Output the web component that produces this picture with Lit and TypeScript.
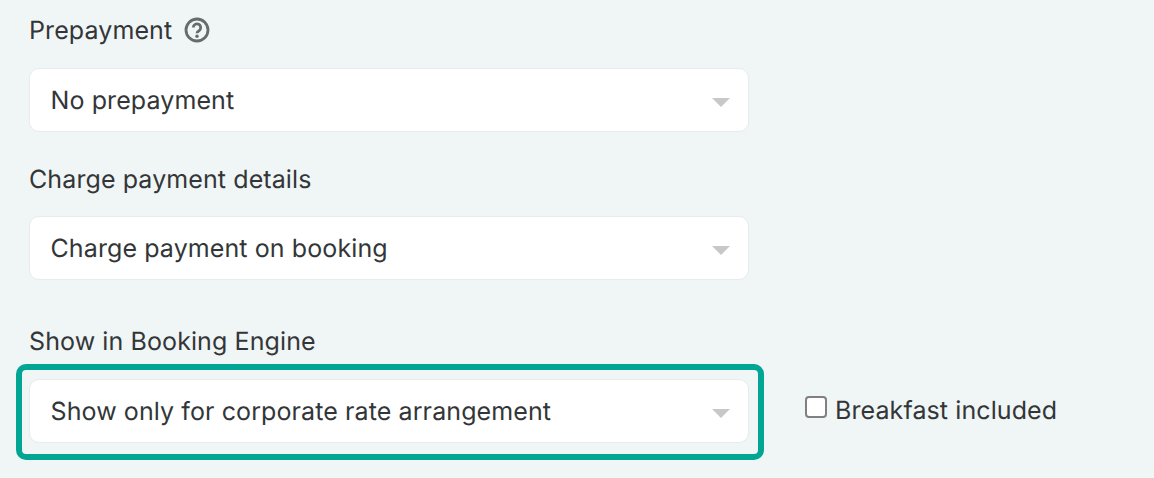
import { LitElement, html, css } from 'lit';
import { customElement } from 'lit/decorators.js';

@customElement('app-root')
export class AppRoot extends LitElement {
  static styles = css`
    :host {
      display: block;
      width: 1154px;
      height: 478px;
      overflow: hidden;
      background: #f0f5f5;
      color: #333638;
      font-family: Inter, 'Liberation Sans', sans-serif;
      font-size: 25px;
      line-height: 32px;
      letter-spacing: 0.1px;
      text-rendering: geometricPrecision;
    }

    .form {
      display: flex;
      flex-direction: column;
      padding: 14px 0 0 29px;
    }

    .label {
      display: flex;
      align-items: center;
      gap: 12px;
      height: 32px;
      padding-top: 1px;
      box-sizing: border-box;
    }

    .label svg {
      width: 26px;
      height: 26px;
      margin-top: -1px;
    }

    .select {
      display: flex;
      align-items: center;
      justify-content: space-between;
      box-sizing: border-box;
      width: 720px;
      height: 64px;
      margin-top: 22px;
      padding: 1px 18px 0 20.5px;
      background: #fff;
      border: 1px solid #e8ebeb;
      border-radius: 10px;
    }

    .arrow {
      width: 0;
      height: 0;
      margin-top: 3px;
      border-left: 9px solid transparent;
      border-right: 9px solid transparent;
      border-top: 9px solid #c8c8c8;
    }

    .second {
      margin-top: 31px;
    }

    .second + .select {
      margin-top: 21px;
    }

    .third {
      margin-top: 45px;
    }

    .row {
      display: flex;
      align-items: center;
      margin-left: -13px;
      margin-top: 7px;
    }

    .highlight {
      box-sizing: border-box;
      width: 748px;
      height: 96px;
      padding: 9px 0 0 7px;
      border: 6px solid #00a693;
      border-radius: 10px;
    }

    .highlight .select {
      margin-top: 0;
    }

    .check {
      display: flex;
      align-items: center;
      margin-left: 41px;
      margin-top: -2px;
      gap: 8px;
    }

    .box {
      box-sizing: border-box;
      width: 22px;
      height: 22px;
      margin-top: -8px;
      background: #fff;
      border: 2px solid #808080;
      border-radius: 4px;
    }
  `;

  render() {
    return html`
      <div class="form">
        <div class="label">
          Prepayment
          <svg viewBox="0 0 26 26" fill="none">
            <circle cx="13" cy="13" r="11" stroke="#666b6d" stroke-width="2.8"></circle>
            <path d="M9.3 10.6a3.7 3.7 0 1 1 5.7 3.1c-1.3.7-2 1.1-2 2.5" stroke="#666b6d" stroke-width="2.8"></path>
            <circle cx="13" cy="19.2" r="1.7" fill="#666b6d"></circle>
          </svg>
        </div>
        <div class="select">No prepayment<span class="arrow"></span></div>
        <div class="label second">Charge payment details</div>
        <div class="select">Charge payment on booking<span class="arrow"></span></div>
        <div class="label third">Show in Booking Engine</div>
        <div class="row">
          <div class="highlight">
            <div class="select">Show only for corporate rate arrangement<span class="arrow"></span></div>
          </div>
          <label class="check"><span class="box"></span>Breakfast included</label>
        </div>
      </div>
    `;
  }
}
